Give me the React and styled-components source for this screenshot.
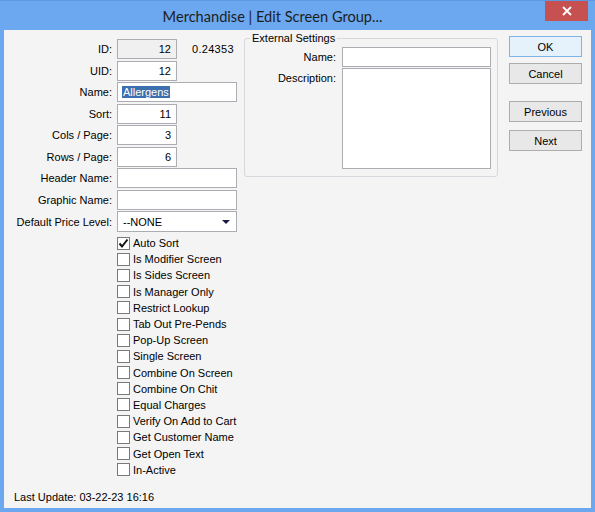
import styled, { createGlobalStyle } from 'styled-components';

const GlobalStyle = createGlobalStyle`
  * { box-sizing: border-box; }
  body {
    margin: 0;
    background: #ffffff;
    font-family: "Liberation Sans", Arial, sans-serif;
    font-size: 11px;
    color: #000;
  }
`;

const Window = styled.div`
  width: 595px;
  height: 512px;
  background: #6ba8ef;
  border-top: 1px solid #5b98e0;
  display: flex;
  flex-direction: column;
`;

const TitleBar = styled.div`
  height: 29px;
  display: flex;
  align-items: flex-start;
`;

const Title = styled.div`
  flex: 1;
  text-align: center;
  font-family: "Lato", "Noto Sans", sans-serif;
  font-size: 14.6px;
  line-height: 29px;
  padding-top: 1px;
  color: #1d1d1d;
`;

const CloseButton = styled.div`
  width: 43px;
  height: 20px;
  margin-right: 7px;
  background: #c75050;
  display: flex;
  align-items: center;
  justify-content: center;
`;

const Client = styled.div`
  flex: 1;
  margin: 0 4px 4px;
  background: #f4f4f4;
  display: flex;
  flex-direction: column;
`;

const TopSection = styled.div`
  display: flex;
  align-items: flex-start;
  padding-top: 2px;
`;

const LeftCol = styled.div`
  width: 233px;
  padding-top: 7px;
  display: flex;
  flex-direction: column;
  gap: 1.5px;
`;

const Row = styled.div`
  display: flex;
  align-items: center;
  height: ${(p) => (p.tall ? 21 : 20)}px;
`;

const Label = styled.div`
  width: ${(p) => p.width || 108}px;
  margin-right: ${(p) => p.gap || 5}px;
  text-align: right;
  white-space: nowrap;
`;

const Box = styled.div`
  width: ${(p) => (p.wide ? 120 : 60)}px;
  height: 100%;
  border: 1px solid #abadb3;
  background: ${(p) => (p.disabled ? '#f0f0f0' : '#ffffff')};
  display: flex;
  align-items: center;
  justify-content: ${(p) => (p.number ? 'flex-end' : 'flex-start')};
  padding: 0 5px;
  white-space: nowrap;
`;

const Selected = styled.span`
  background: #3b6fae;
  color: #ffffff;
  padding: 0 1px;
  margin-left: -1px;
`;

const Extra = styled.div`
  margin-left: 15px;
  letter-spacing: 0.3px;
`;

const Select = styled(Box)`
  justify-content: space-between;
  padding-right: 6px;
`;

const CheckList = styled.div`
  margin-top: 3px;
  padding-left: 113px;
  display: flex;
  flex-direction: column;
`;

const CheckRow = styled.div`
  height: 16.2px;
  display: flex;
  align-items: center;
`;

const CheckBox = styled.div`
  width: 13px;
  height: 13px;
  border: 1px solid #7a7a7a;
  background: #ffffff;
  margin-right: 3px;
  display: flex;
  align-items: center;
  justify-content: center;
`;

const Group = styled.fieldset`
  margin: 0 0 0 7px;
  width: 254px;
  border: 1px solid #d5d9dd;
  border-radius: 3px;
  padding: 2px 5px 7px 5px;
`;

const Legend = styled.legend`
  padding: 0 2px;
  line-height: 13px;
`;

const GroupRow = styled.div`
  display: flex;
  align-items: ${(p) => (p.top ? 'flex-start' : 'center')};
  margin-top: ${(p) => p.mt || 0}px;
`;

const Field = styled.div`
  width: 149px;
  height: ${(p) => p.h}px;
  border: 1px solid #abadb3;
  background: #ffffff;
`;

const ButtonCol = styled.div`
  margin: 4px 0 0 11px;
  width: 73px;
  display: flex;
  flex-direction: column;
`;

const Button = styled.div`
  height: 21px;
  margin-top: ${(p) => p.mt || 0}px;
  border: 1px solid ${(p) => (p.primary ? '#7eb4ea' : '#adadad')};
  background: ${(p) => (p.primary ? '#e5f1fb' : '#e8e8e8')};
  display: flex;
  align-items: center;
  justify-content: center;
`;

const Footer = styled.div`
  margin-top: auto;
  padding: 0 0 4px 10px;
  line-height: 13px;
`;

const checks = [
  ['Auto Sort', true],
  ['Is Modifier Screen'],
  ['Is Sides Screen'],
  ['Is Manager Only'],
  ['Restrict Lookup'],
  ['Tab Out Pre-Pends'],
  ['Pop-Up Screen'],
  ['Single Screen'],
  ['Combine On Screen'],
  ['Combine On Chit'],
  ['Equal Charges'],
  ['Verify On Add to Cart'],
  ['Get Customer Name'],
  ['Get Open Text'],
  ['In-Active'],
];

const App = () => {
  return (
    <Window>
      <GlobalStyle />
      <TitleBar>
        <Title>Merchandise | Edit Screen Group...</Title>
        <CloseButton>
          <svg width="10" height="10" viewBox="0 0 10 10">
            <path d="M1 1L9 9M9 1L1 9" stroke="#fff" strokeWidth="1.8" />
          </svg>
        </CloseButton>
      </TitleBar>
      <Client>
        <TopSection>
          <LeftCol>
            <Row>
              <Label>ID:</Label>
              <Box disabled number>12</Box>
              <Extra>0.24353</Extra>
            </Row>
            <Row>
              <Label>UID:</Label>
              <Box number>12</Box>
            </Row>
            <Row>
              <Label>Name:</Label>
              <Box wide>
                <Selected>Allergens</Selected>
              </Box>
            </Row>
            <Row>
              <Label>Sort:</Label>
              <Box number>11</Box>
            </Row>
            <Row>
              <Label>Cols / Page:</Label>
              <Box number>3</Box>
            </Row>
            <Row>
              <Label>Rows / Page:</Label>
              <Box number>6</Box>
            </Row>
            <Row>
              <Label>Header Name:</Label>
              <Box wide />
            </Row>
            <Row>
              <Label>Graphic Name:</Label>
              <Box wide />
            </Row>
            <Row tall>
              <Label>Default Price Level:</Label>
              <Select wide>
                <span>--NONE</span>
                <svg width="8" height="4" viewBox="0 0 8 4">
                  <path d="M0 0H8L4 4Z" fill="#1a1a40" />
                </svg>
              </Select>
            </Row>
          </LeftCol>
          <Group>
            <Legend>External Settings</Legend>
            <GroupRow>
              <Label width={86} gap={6}>Name:</Label>
              <Field h={20} />
            </GroupRow>
            <GroupRow top mt={1}>
              <Label width={86} gap={6} style={{ paddingTop: 4 }}>
                Description:
              </Label>
              <Field h={101} />
            </GroupRow>
          </Group>
          <ButtonCol>
            <Button primary>OK</Button>
            <Button mt={6}>Cancel</Button>
            <Button mt={17}>Previous</Button>
            <Button mt={8}>Next</Button>
          </ButtonCol>
        </TopSection>
        <CheckList>
          {checks.map(([label, on]) => (
            <CheckRow key={label}>
              <CheckBox>
                {on && (
                  <svg width="11" height="11" viewBox="0 0 11 11">
                    <path d="M1.5 5.5L4 8.5L9.5 1.5" stroke="#111" strokeWidth="2" fill="none" />
                  </svg>
                )}
              </CheckBox>
              {label}
            </CheckRow>
          ))}
        </CheckList>
        <Footer>Last Update: 03-22-23 16:16</Footer>
      </Client>
    </Window>
  );
};

export default App;
